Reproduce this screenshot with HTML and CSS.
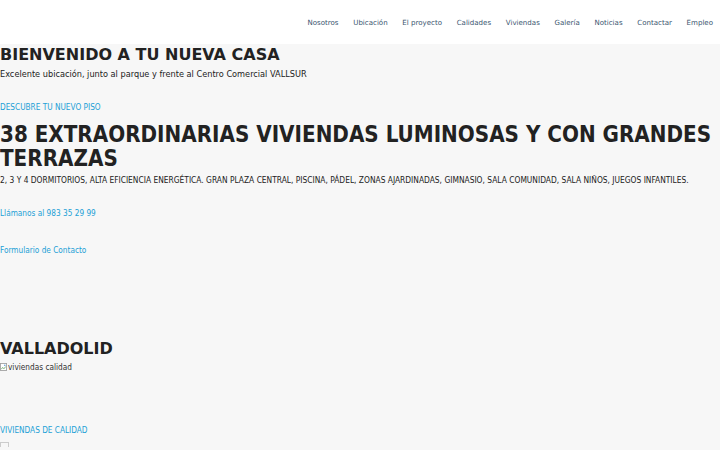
FILE: index.html
```html
<!DOCTYPE html>
<html lang="es">
<head>
<meta charset="utf-8">
<title>Bienvenido a tu nueva casa</title>
<link rel="stylesheet" href="styles.css">
</head>
<body>
<header class="site-header">
  <nav class="main-nav">
    <a href="#">Nosotros</a>
    <a href="#">Ubicación</a>
    <a href="#">El proyecto</a>
    <a href="#">Calidades</a>
    <a href="#">Viviendas</a>
    <a href="#">Galería</a>
    <a href="#">Noticias</a>
    <a href="#">Contactar</a>
    <a href="#">Empleo</a>
  </nav>
</header>
<main class="content">
  <section class="hero">
    <h1 class="title">BIENVENIDO A TU NUEVA CASA</h1>
    <p class="text">Excelente ubicación, junto al parque y frente al Centro Comercial VALLSUR</p>
    <a class="link link-first" href="#">DESCUBRE TU NUEVO PISO</a>
  </section>
  <section class="intro">
    <h2 class="big-title">38 EXTRAORDINARIAS VIVIENDAS LUMINOSAS Y CON GRANDES TERRAZAS</h2>
    <p class="text text-caps">2, 3 Y 4 DORMITORIOS, ALTA EFICIENCIA ENERGÉTICA. GRAN PLAZA CENTRAL, PISCINA, PÁDEL, ZONAS AJARDINADAS, GIMNASIO, SALA COMUNIDAD, SALA NIÑOS, JUEGOS INFANTILES.</p>
    <a class="link link-phone" href="#">Llámanos al 983 35 29 99</a>
    <a class="link link-form" href="#">Formulario de Contacto</a>
  </section>
  <section class="city">
    <h2 class="title">VALLADOLID</h2>
    <span class="broken-img"><svg class="broken-icon" viewBox="0 0 8 9" width="7" height="8"><rect x="0.5" y="0.5" width="7" height="8" fill="#fff" stroke="#a0a0a0"/><path d="M1.5 7 L3 5 L4.5 6.5 L6.5 4" fill="none" stroke="#6aa86a" stroke-width="1"/><circle cx="5.5" cy="2.5" r="0.9" fill="#5a9ad6"/></svg>viviendas calidad</span>
    <a class="link link-quality" href="#">VIVIENDAS DE CALIDAD</a>
    <span class="broken-small"></span>
  </section>
</main>
</body>
</html>
```
FILE: styles.css
```css
html, body {
  margin: 0;
  padding: 0;
}
body {
  background: #f7f7f7;
  font-family: "DejaVu Sans", Verdana, sans-serif;
  color: #222;
  width: 720px;
  height: 450px;
  overflow: hidden;
}
.site-header {
  background: #ffffff;
  height: 44px;
  display: flex;
  justify-content: flex-end;
  align-items: center;
  padding-right: 7px;
}
.main-nav {
  display: flex;
  gap: 14.7px;
}
.main-nav a {
  color: #3b5670;
  text-decoration: none;
  font-size: 7.05px;
}
.content {
  display: flex;
  flex-direction: column;
}
.hero, .intro, .city {
  display: flex;
  flex-direction: column;
  align-items: flex-start;
}
.title {
  font-size: 16px;
  font-weight: bold;
  margin: 1px 0 0;
  line-height: 20px;
  color: #222;
}
.text {
  margin: 3px 0 0;
  font-size: 8.2px;
  line-height: 12px;
}
.text-caps {
  font-family: "DejaVu Sans Condensed", "DejaVu Sans", sans-serif;
  font-stretch: condensed;
  font-size: 8.35px;
}
.link {
  font-family: "DejaVu Sans Condensed", "DejaVu Sans", sans-serif;
  font-stretch: condensed;
  color: #1c9fd6;
  text-decoration: none;
  font-size: 8.2px;
  line-height: 12px;
}
.link-first {
  margin-top: 21px;
}
.big-title {
  font-family: "DejaVu Sans Condensed", "DejaVu Sans", sans-serif;
  font-stretch: condensed;
  font-size: 22.2px;
  font-weight: bold;
  line-height: 24px;
  margin: 9px 0 0;
  color: #222;
}
.intro .text {
  margin-top: 4px;
}
.link-phone {
  margin-top: 21px;
}
.link-form {
  margin-top: 25px;
}
.city {
  margin-top: 82px;
}
.broken-img {
  display: flex;
  align-items: center;
  font-family: "DejaVu Sans Condensed", "DejaVu Sans", sans-serif;
  font-stretch: condensed;
  font-size: 8.2px;
  line-height: 12px;
  color: #333;
  margin-top: 2px;
}
.broken-icon {
  margin-right: 1px;
}
.link-quality {
  margin-top: 51px;
}
.broken-small {
  margin-top: 6px;
  width: 7px;
  height: 4px;
  border-top: 1px solid #ccc;
  border-left: 1px solid #ccc;
  border-right: 1px solid #ccc;
}
```
